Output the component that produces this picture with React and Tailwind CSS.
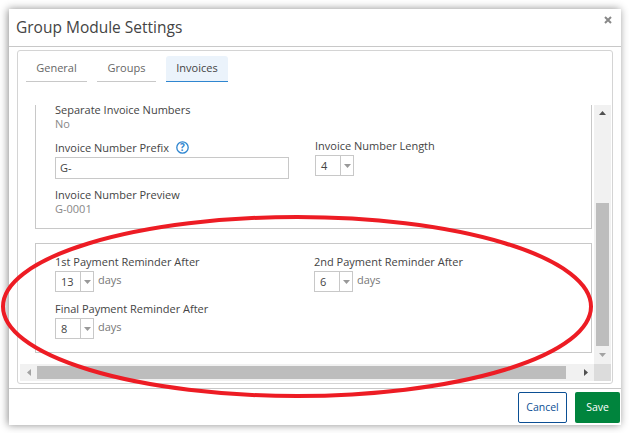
import React from "react";

const Select = ({ value, width = "w-[39px]" }) => (
  <div className={`flex h-[21px] ${width} border border-[#c8c8c8] bg-white`}>
    <span className="flex-1 pl-[5px] text-[11px] leading-[20px] text-[#444]">{value}</span>
    <span className="flex w-[13px] items-center justify-center border-l border-[#c8c8c8]">
      <svg width="7" height="4" viewBox="0 0 7 4">
        <path d="M0 0h7L3.500 4z" fill="#999" />
      </svg>
    </span>
  </div>
);

const Label = ({ children }) => (
  <div className="text-[11px] leading-[15px] text-[#444]">{children}</div>
);

const Tab = ({ label, active, width }) => (
  <div
    className={`${width} flex h-[26px] items-center justify-center border-b text-[11px] ${
      active
        ? "rounded-t-[3px] border-[#2f86d0] bg-[#ebf3fb] text-[#444]"
        : "border-[#c8c8c8] text-[#666]"
    }`}
  >
    {label}
  </div>
);

const Reminder = ({ title, value }) => (
  <div>
    <Label>{title}</Label>
    <div className="mt-[2px] flex gap-[4px]">
      <Select value={value} />
      <span className="text-[11px] leading-[18px] text-[#777]">days</span>
    </div>
  </div>
);

export default function App() {
  return (
    <div
      className="relative h-[433px] w-[629px] overflow-hidden bg-white p-[9px] pb-[8px]"
      style={{ fontFamily: '"Open Sans", sans-serif' }}
    >
      <div className="flex h-[416px] w-[612px] flex-col bg-white shadow-[-1px_0_8px_rgba(0,0,0,0.45)]">
        {/* header */}
        <div className="relative h-[38px] shrink-0 border-b border-[#c8c8c8] pl-[7px] pt-[7px] text-[15.5px] leading-[22px] text-[#444]">
          Group Module Settings
          <svg className="absolute right-[9px] top-[7px]" width="8" height="8" viewBox="0 0 8 8">
            <path d="M1 1l6 6M7 1L1 7" stroke="#888" strokeWidth="2" />
          </svg>
        </div>

        {/* panel */}
        <div className="mx-[8px] mt-[3px] flex h-[334px] flex-col rounded-[3px] border border-[#d4d4d4] pb-[2px]">
          <div className="flex h-[54px] shrink-0 gap-[10px] pl-[8px] pt-[5px]">
            <Tab label="General" width="w-[61px]" />
            <Tab label="Groups" width="w-[59px]" />
            <Tab label="Invoices" active width="w-[62px]" />
          </div>

          <div className="flex min-h-0 flex-1 flex-col pl-[2px] pr-[1px]">
            <div className="flex min-h-0 flex-1">
              <div className="min-w-0 flex-1 pl-[15px] pr-[2px]">
                <div className="h-[124px] border-x border-b border-[#c8c8c8] pl-[19px]">
                  <div className="flex">
                    <div className="-mt-[3px] w-[260px]">
                      <Label>Separate Invoice Numbers</Label>
                      <div className="text-[11px] leading-[14px] text-[#888]">No</div>
                      <div className="mt-[9px] flex items-center gap-[7px]">
                        <Label>Invoice Number Prefix</Label>
                        <svg width="13" height="13" viewBox="0 0 13 13">
                          <circle cx="6.500" cy="6.500" r="5.700" fill="none" stroke="#2f86d0" strokeWidth="1.300" />
                          <text x="6.500" y="10" textAnchor="middle" fontSize="10" fontWeight="700" fill="#2f86d0">?</text>
                        </svg>
                      </div>
                      <div className="mt-[2px] h-[22px] w-[234px] border border-[#c8c8c8] pl-[4px] text-[11px] leading-[20px] text-[#444]">
                        G-
                      </div>
                      <div className="mt-[8px]">
                        <Label>Invoice Number Preview</Label>
                      </div>
                      <div className="text-[11px] leading-[14px] text-[#888]">G-0001</div>
                    </div>
                    <div className="pt-[33px]">
                      <Label>Invoice Number Length</Label>
                      <div className="mt-[2px]">
                        <Select value="4" />
                      </div>
                    </div>
                  </div>
                </div>

                <div className="mt-[14px] h-[110px] border border-[#c8c8c8] pl-[19px] pt-[10px]">
                  <div className="flex">
                    <div className="w-[259px]">
                      <Reminder title="1st Payment Reminder After" value="13" />
                    </div>
                    <Reminder title="2nd Payment Reminder After" value="6" />
                  </div>
                  <div className="mt-[9px]">
                    <Reminder title="Final Payment Reminder After" value="8" />
                  </div>
                </div>
              </div>

              {/* vertical scrollbar */}
              <div className="flex w-[17px] shrink-0 flex-col items-center bg-[#f1f1f1] pt-[6px]">
                <svg width="7" height="4" viewBox="0 0 7 4">
                  <path d="M0 4h7L3.500 0z" fill="#505050" />
                </svg>
                <div className="mt-[88px] w-[13px] flex-1 bg-[#bdbdbd]" />
                <svg className="my-[7px]" width="7" height="4" viewBox="0 0 7 4">
                  <path d="M0 0h7L3.500 4z" fill="#a3a3a3" />
                </svg>
              </div>
            </div>

            {/* horizontal scrollbar */}
            <div className="flex h-[17px] shrink-0 items-center bg-[#f1f1f1]">
              <div className="flex w-[17px] justify-center">
                <svg width="4" height="7" viewBox="0 0 4 7">
                  <path d="M4 0v7L0 3.500z" fill="#a3a3a3" />
                </svg>
              </div>
              <div className="h-[13px] w-[529px] bg-[#bdbdbd]" />
              <div className="flex flex-1 justify-end pr-[6px]">
                <svg width="4" height="7" viewBox="0 0 4 7">
                  <path d="M0 0v7L4 3.500z" fill="#505050" />
                </svg>
              </div>
              <div className="h-[17px] w-[17px] bg-[#dcdcdc]" />
            </div>
          </div>
        </div>

        {/* footer */}
        <div className="mt-[4px] flex flex-1 items-start justify-end gap-[8px] border-t border-[#c8c8c8] pr-[1px] pt-[3px]">
          <button className="h-[31px] w-[49px] rounded-[2px] border border-[#0b4f94] bg-white text-[10.5px] text-[#0b4f94]">
            Cancel
          </button>
          <button className="h-[31px] w-[45px] rounded-[2px] bg-[#00843d] text-[10.5px] text-white">
            Save
          </button>
        </div>
      </div>

      {/* hand drawn annotation */}
      <svg className="pointer-events-none absolute left-0 top-0" width="629" height="433" viewBox="0 0 629 433">
        <ellipse cx="297" cy="306.500" rx="294" ry="89.500" fill="none" stroke="#ed1c24" strokeWidth="4" />
      </svg>
    </div>
  );
}
